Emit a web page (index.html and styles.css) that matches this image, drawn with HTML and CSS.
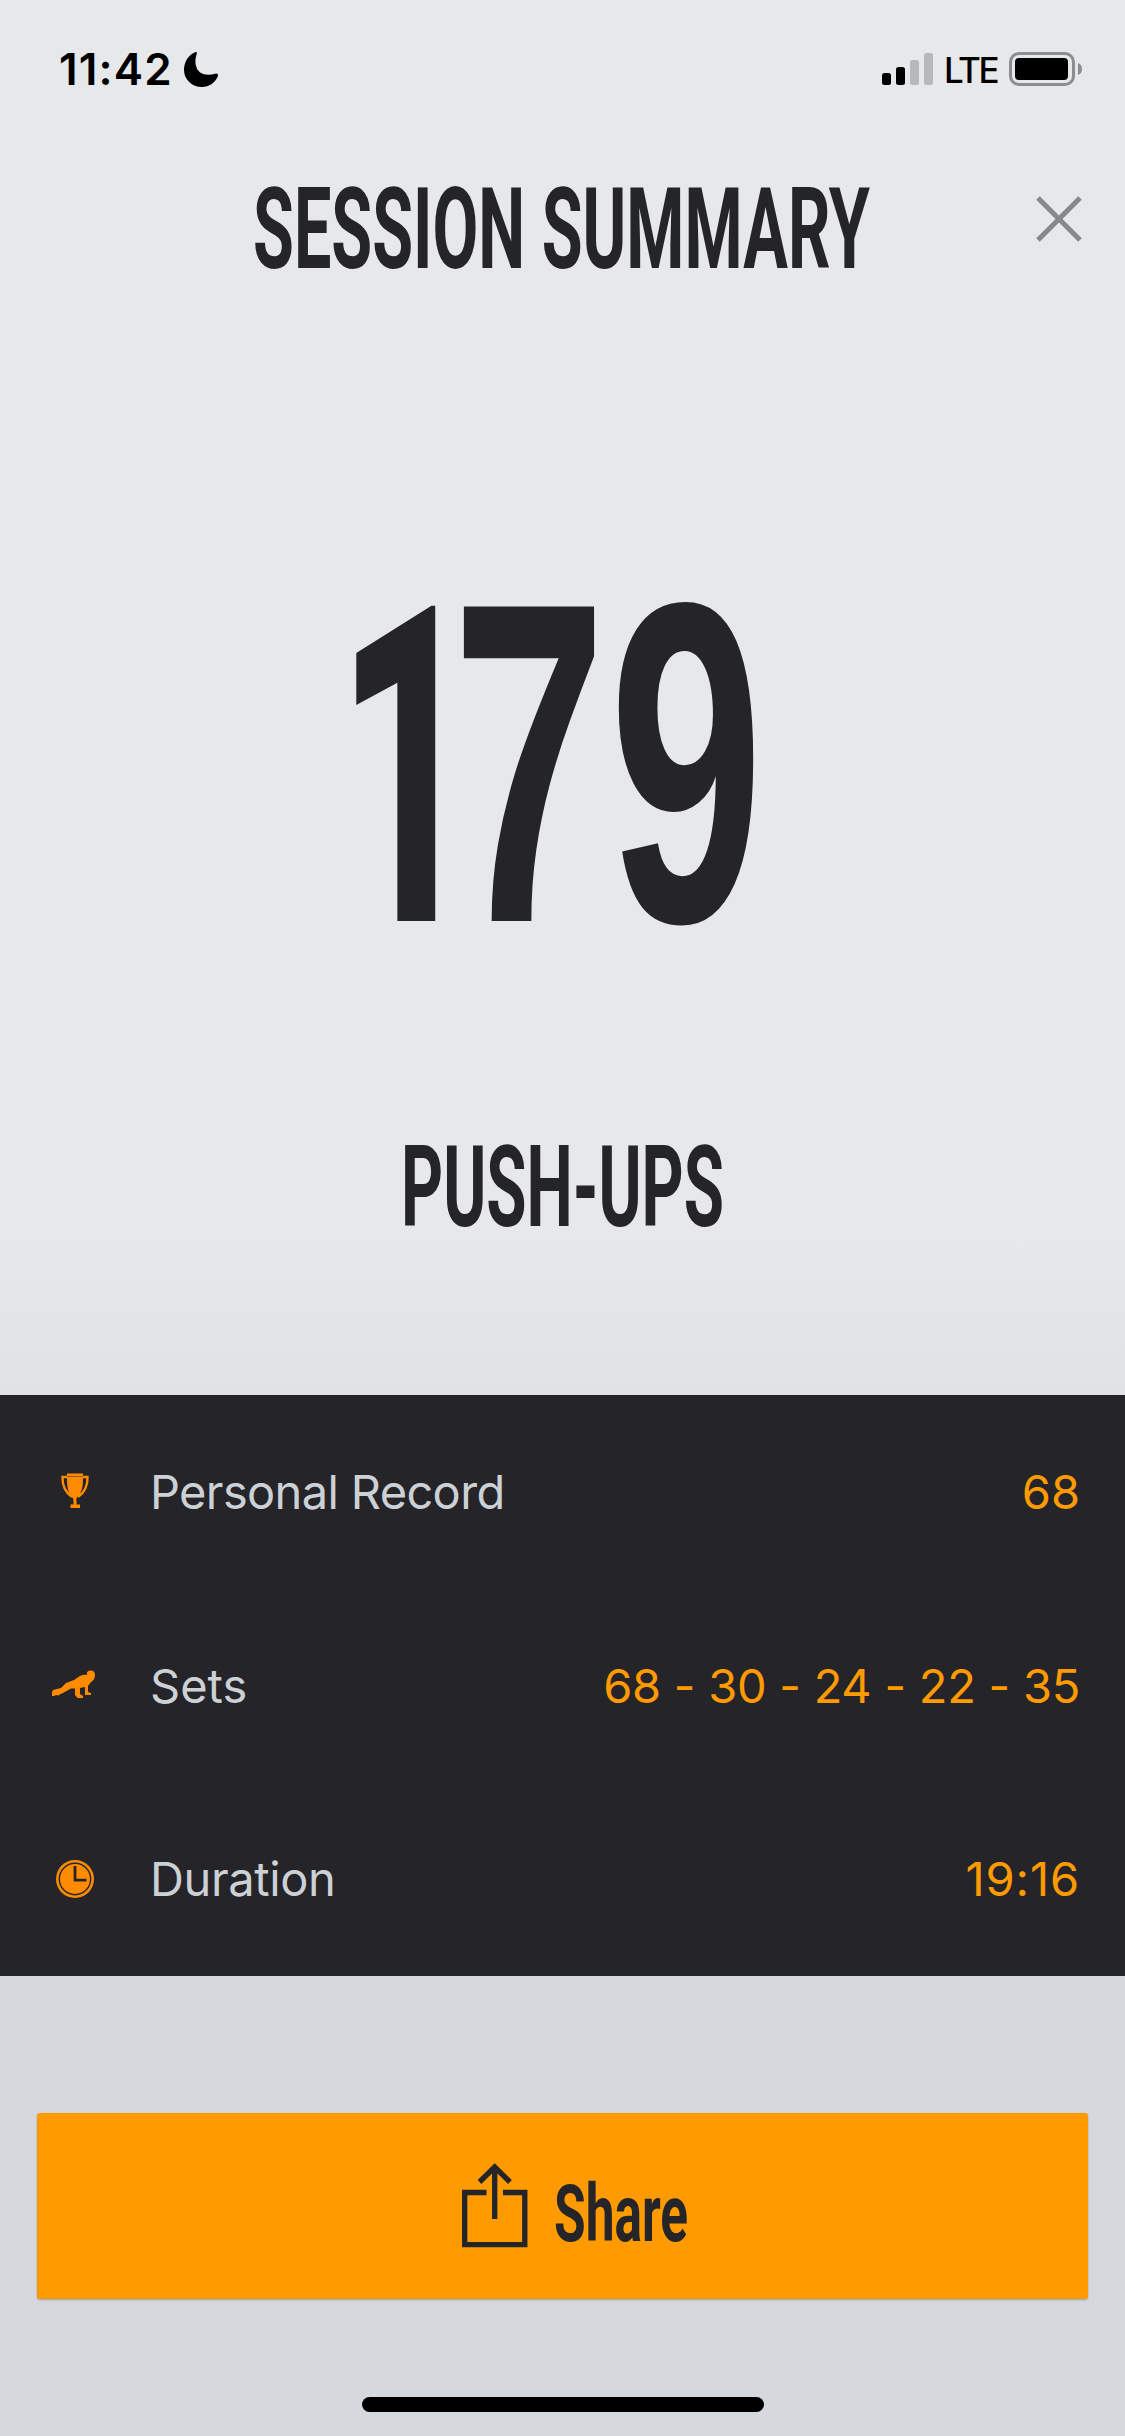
FILE: index.html
```
<!DOCTYPE html>
<html lang="en">
<head>
    <meta charset="UTF-8">
    <title>Session Summary</title>
    <link rel="stylesheet" href="styles.css">
</head>
<body>
    <div class="status-bar">
        <span class="time">11:42</span>
        <svg class="moon" width="34" height="35" viewBox="0 0 34 35"><path d="M13 .5Q8.500 14 16 20.500Q22 24.500 32 21.500Q34.500 21.500 34 24C31 31 25 35 18 35C8 35 0 27.500 0 18C0 10 4.500 3 11 .3Q12.500 -.3 13 .5Z"/></svg>
        <svg class="signal" width="51" height="32" viewBox="0 0 51 32">
            <rect y="20" width="9" height="12" rx="2.500"/>
            <rect x="14" y="14" width="9" height="18" rx="2.500"/>
            <rect class="off" x="28" y="7" width="9" height="25" rx="2.500"/>
            <rect class="off" x="42" width="9" height="32" rx="2.500"/>
        </svg>
        <span class="network">LTE</span>
        <svg class="battery" width="73" height="34" viewBox="0 0 73 34">
            <rect class="shell" x="1.500" y="1.500" width="63" height="31" rx="8.500"/>
            <rect x="6" y="6" width="53" height="22" rx="4"/>
            <path class="nub" d="M69 11Q73 12.500 73 17T69 23Z"/>
        </svg>
    </div>

    <div class="header">
        <svg class="heading" width="650" height="140" viewBox="0 0 650 140"><text x="9" y="108" textLength="617" lengthAdjust="spacingAndGlyphs">SESSION SUMMARY</text></svg>
        <svg class="close" width="46" height="46" viewBox="0 0 46 46"><path d="M2 2L44 44M44 2L2 44"/></svg>
    </div>

    <div class="result">
        <svg class="count" width="420" height="540" viewBox="0 0 420 540">
            <text class="one" transform="translate(0 421) scale(.56 1)" x="-25">1</text>
            <text transform="translate(0 421) scale(.607 1)" x="168 427">79</text>
        </svg>
        <svg class="heading" width="340" height="140" viewBox="0 0 340 140"><text x="8" y="108" textLength="323" lengthAdjust="spacingAndGlyphs">PUSH-UPS</text></svg>
    </div>

    <div class="stats">
        <div class="row">
            <svg class="icon" width="46" height="40" viewBox="0 0 46 40">
                <path d="M15 1.500h16v3H15zM15 5h16q.5 15-5.500 19.500Q24 26.500 24.500 29v3.500h3.500V36h-9.500v-3.500H21.500V29q0-2.500-1.500-4Q14.500 20.500 15 5z"/>
                <path class="line" d="M15 5H10.500Q10 18 20 25M31 5h4.500Q36 18 26 25"/>
            </svg>
            <span class="label record">Personal Record</span>
            <span class="value">68</span>
        </div>
        <div class="row">
            <svg class="icon" width="46" height="40" viewBox="0 0 46 40">
                <path d="M0 27Q0 23.500 3 23.500L9 22L14 17L22 14L28 10Q32 8 35 9Q34 5 38 4.500Q43 4 43 9Q43 14 39 16L36 20V26L39 27V29H33V21L28 22V28L31 30V32H25.500L23 29V22.500L19 22.500L10 27.500Q7 28 7 29.500L4 29L2 30H0Z"/>
            </svg>
            <span class="label">Sets</span>
            <span class="value sets">68 - 30 - 24 - 22 - 35</span>
        </div>
        <div class="row">
            <svg class="icon" width="46" height="40" viewBox="0 0 46 40">
                <circle cx="23" cy="20" r="19"/>
                <circle class="ring" cx="23" cy="20" r="15.700"/>
                <path class="hands" d="M23 7V21.200H34.500"/>
            </svg>
            <span class="label duration">Duration</span>
            <span class="value clock">19:16</span>
        </div>
    </div>

    <div class="footer">
        <div class="share">
            <svg class="share-icon" width="66" height="86" viewBox="0 0 66 86"><path d="M24.500 29.500H2.700V81.700H62.800V29.500H41M32.700 56V4M17.500 19L32.700 4L48 19"/></svg>
            <svg class="share-text" width="150" height="100" viewBox="0 0 150 100"><text x="13" y="78" textLength="134" lengthAdjust="spacingAndGlyphs">Share</text></svg>
        </div>
        <div class="home-bar"></div>
    </div>
</body>
</html>
```
FILE: styles.css
```
body {
    margin: 0;
    width: 1125px;
    height: 2436px;
    display: flex;
    flex-direction: column;
    overflow: hidden;
    font-family: Inter, "Liberation Sans", sans-serif;
    color: #252429;
    background: linear-gradient(#e6e8ea 1240px, #e0e2e6 1395px);
}
svg {
    display: block;
    flex: none;
    overflow: visible;
}
.status-bar {
    height: 138px;
    padding: 0 43px 0 59px;
    box-sizing: border-box;
    display: flex;
    align-items: center;
    color: #000;
}
.time {
    font-size: 44px;
    font-weight: 600;
    letter-spacing: 1.2px;
    width: 125px;
}
.signal {
    margin-left: auto;
}
.off {
    fill: #b7b8ba;
}
.network {
    font-size: 35px;
    font-weight: 500;
    letter-spacing: -2.4px;
    width: 65px;
    margin-left: 11px;
    padding-top: 2px;
}
.shell {
    fill: none;
    stroke: #8c8d8f;
    stroke-width: 3;
}
.nub {
    fill: #8c8d8f;
}
.header {
    height: 142px;
    padding: 22px 43px 0 244px;
    box-sizing: border-box;
    display: flex;
    justify-content: space-between;
}
.heading, .share-text, .one {
    fill: #252429;
    font-family: Roboto, "Liberation Sans", sans-serif;
}
.heading {
    font-size: 113px;
    font-weight: 700;
}
.close {
    margin-top: 36px;
    fill: none;
    stroke: #87888a;
    stroke-width: 5;
}
.result {
    height: 1115px;
    padding-top: 220px;
    box-sizing: border-box;
    display: flex;
    flex-direction: column;
    align-items: center;
}
.count {
    fill: #252429;
    font-family: "Liberation Sans", sans-serif;
    font-size: 457px;
    font-weight: 700;
    margin-right: 5px;
    margin-bottom: 78px;
}
.one {
    font-size: 443px;
    font-weight: 800;
}
.stats {
    height: 581px;
    display: flex;
    flex-direction: column;
    background: #252429;
}
.row {
    flex: 1;
    display: flex;
    align-items: center;
    padding: 0 45px 0 52px;
    font-size: 47px;
}
.icon {
    fill: #ff8c00;
}
.line {
    fill: none;
    stroke: #ff8c00;
    stroke-width: 2.4;
}
.ring, .hands {
    fill: none;
    stroke: #252429;
    stroke-width: 1.4;
}
.hands {
    stroke-width: 2.8;
}
.label {
    color: #cbd1d4;
    margin-left: 52px;
}
.record {
    letter-spacing: -0.65px;
}
.duration {
    letter-spacing: -0.4px;
}
.value {
    color: #ff9b00;
    margin-left: auto;
}
.sets {
    letter-spacing: -0.25px;
}
.clock {
    letter-spacing: 0.9px;
}
.duration, .clock {
    padding-bottom: 2px;
}
.footer {
    flex: 1;
    display: flex;
    flex-direction: column;
    align-items: center;
    padding-top: 137px;
    background: #d5d8dd;
}
.share {
    width: 1051px;
    height: 186px;
    display: flex;
    padding: 50px 0 0 425px;
    box-sizing: border-box;
    background: #ff9b00;
    border-radius: 3px;
    box-shadow: 0 1px 2px rgba(0, 0, 0, 0.25);
}
.share-icon {
    fill: none;
    stroke: #252429;
    stroke-width: 5.3;
}
.share-text {
    margin-left: 13px;
    font-size: 80px;
    font-weight: 700;
}
.home-bar {
    width: 402px;
    height: 15px;
    margin-top: 98px;
    border-radius: 8px;
    background: #000;
}
```
